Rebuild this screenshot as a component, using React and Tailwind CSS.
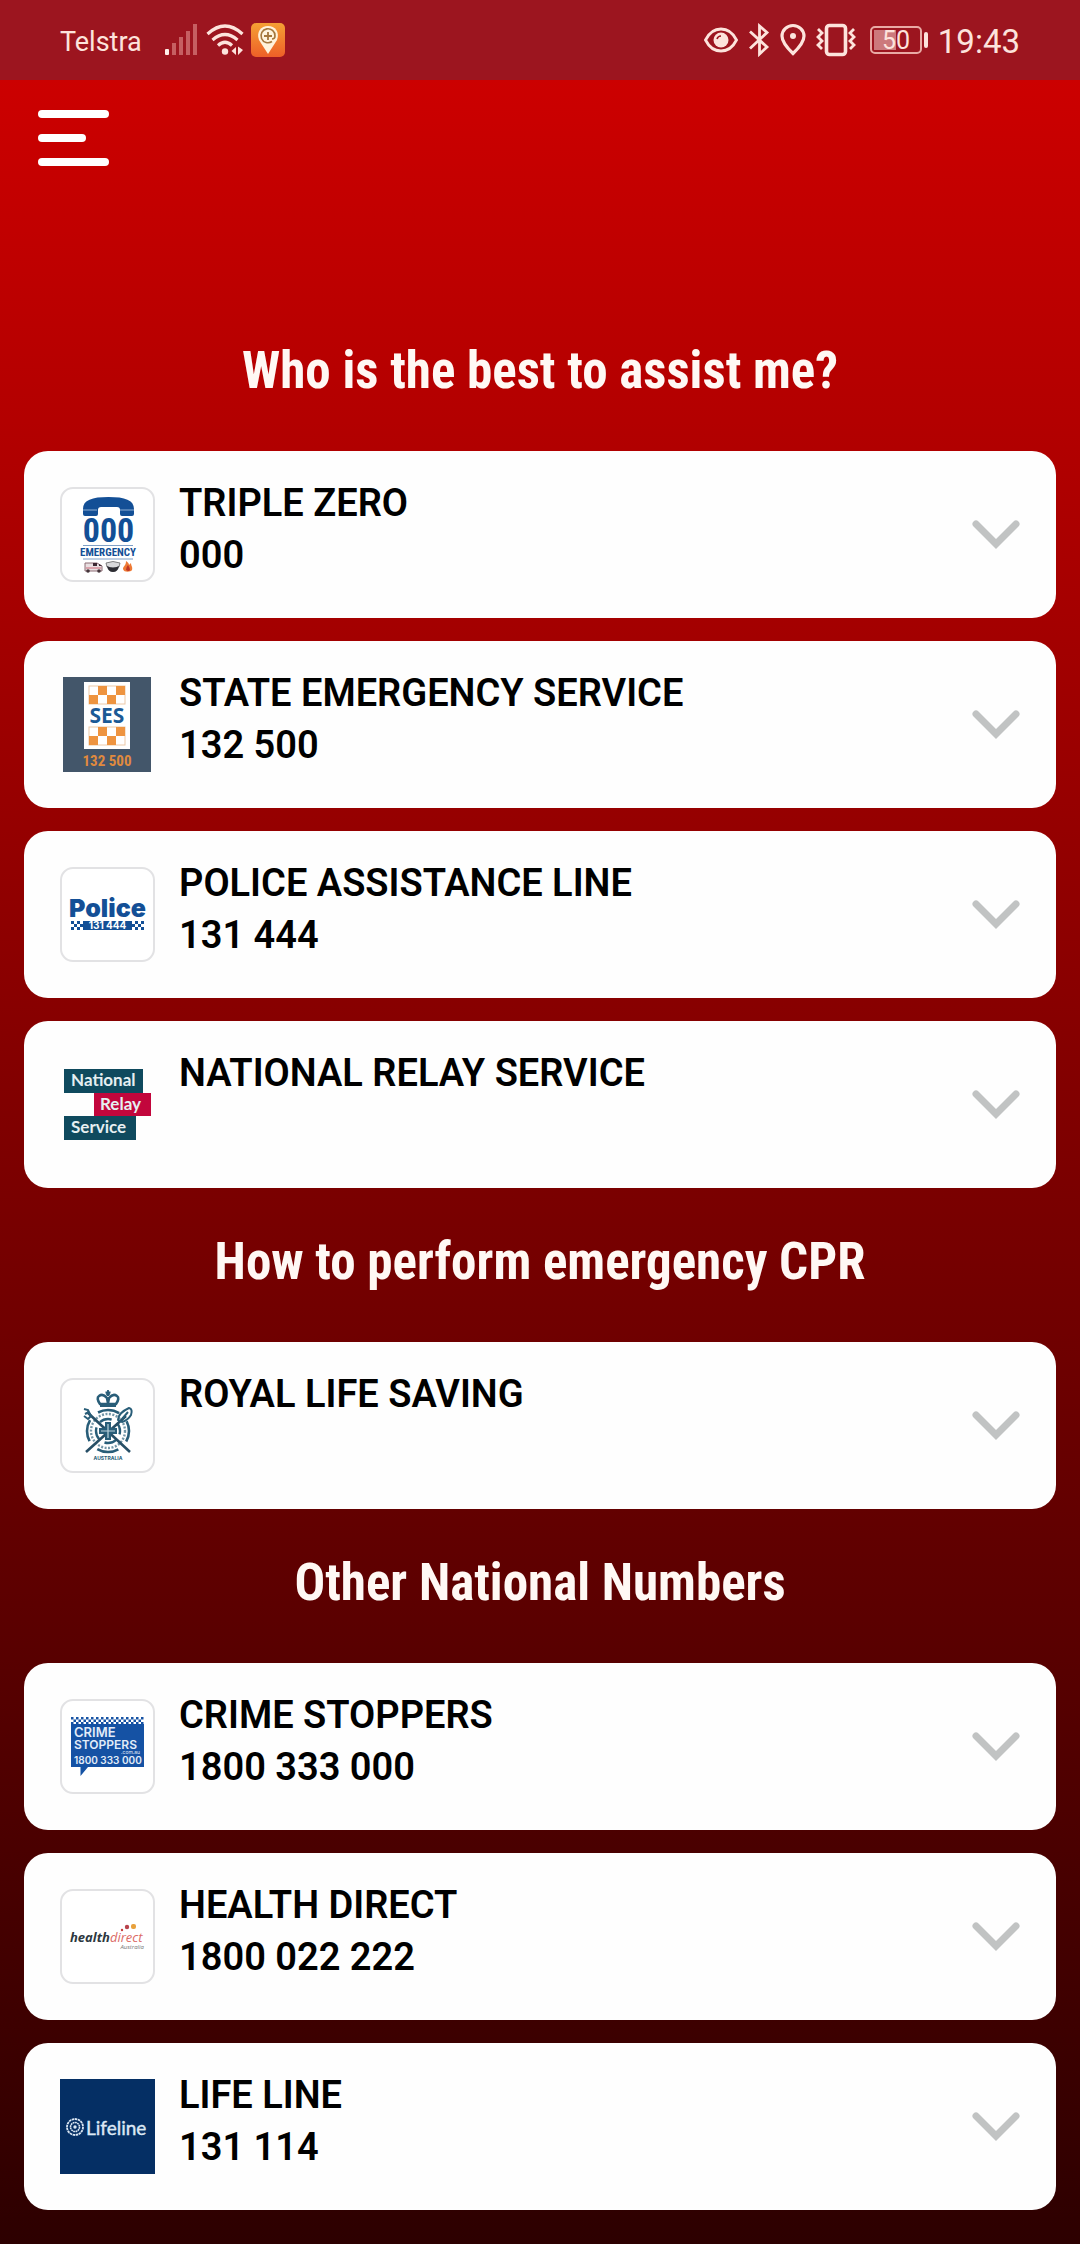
import React from "react";

const CONDENSED = '"Roboto Condensed", "Liberation Sans Narrow", "Open Sans Condensed", sans-serif';

function Checks({ x, y, cols, rows, size, fill, odd = 0 }) {
  const cells = [];
  for (let r = 0; r < rows; r++) {
    for (let c = 0; c < cols; c++) {
      if ((r + c + odd) % 2 === 0) {
        cells.push(<rect key={r + "-" + c} x={x + c * size} y={y + r * size} width={size} height={size} fill={fill} />);
      }
    }
  }
  return <g>{cells}</g>;
}

function Logo({ children, framed }) {
  return (
    <svg viewBox="0 0 95 95" className="size-[95px] shrink-0" aria-hidden="true">
      {framed && <rect x="1" y="1" width="93" height="93" rx="12" fill="#fff" stroke="#e2e2e4" strokeWidth="2" />}
      {children}
    </svg>
  );
}

function TripleZeroLogo() {
  return (
    <Logo framed>
      <path d="M23 22C23 13 32 10 48.500 10S74 13 74 22v5q0 2-2 2H62q-2 0-2-2v-4q0-3-3-3H41q-3 0-3 3v4q0 2-2 2H25q-2 0-2-2z" fill="#134f96" />
      <path d="M23 23h14M60 23h14" stroke="#8fb0d4" strokeWidth="1" />
      <text x="48.500" y="55" textAnchor="middle" fontSize="34" fontWeight="700" fill="#134f96" fontFamily={CONDENSED}>000</text>
      <path d="M23 58.500h50M23 72h50" stroke="#7f9fc6" strokeWidth="1" />
      <text x="48" y="69" textAnchor="middle" fontSize="11" fontWeight="700" fill="#134f96" fontFamily={CONDENSED}>EMERGENCY</text>
      <path d="M25 76h12l5 3v5H25z" fill="#e9dfe1" stroke="#8c6c74" strokeWidth="1" />
      <path d="M33 76h4v3h-4zM39 77l3 2h-3z" fill="#3a2630" />
      <path d="M26 81h15" stroke="#cc6677" strokeWidth="1" />
      <circle cx="28" cy="84" r="1.800" fill="#44343a" />
      <circle cx="39" cy="84" r="1.800" fill="#44343a" />
      <path d="M46 76q7-3 14 0l-1 4q-6 3-12 0z" fill="#d9d9db" stroke="#666" strokeWidth=".8" />
      <path d="M47 79q6 3 12 0-1 6-6 6t-6-6z" fill="#2d2d33" />
      <path d="M63 82c0-3 3-3 3-8 2 1 3 3 3 4l2-2c0 3 2 4 1 7-1 2-8 3-9-1z" fill="#ee7a35" />
      <path d="M66 83q0-3 2-5 2 3 2 5-1 2-4 0z" fill="#bf3625" />
    </Logo>
  );
}

function SesLogo() {
  return (
    <Logo>
      <rect x="3" y="0" width="88" height="95" fill="#43566a" />
      <rect x="24" y="5" width="46" height="67" fill="#fff" />
      <rect x="29" y="9" width="36" height="18" fill="#fff" stroke="#ecc9a8" strokeWidth="1" />
      <Checks x={29} y={9} cols={4} rows={2} size={9} fill="#ee9440" odd={1} />
      <text x="47" y="46" textAnchor="middle" fontSize="21" fontWeight="700" fill="#1b5a96" fontFamily='"Open Sans", sans-serif'>SES</text>
      <rect x="29" y="50" width="36" height="18" fill="#fff" stroke="#ecc9a8" strokeWidth="1" />
      <Checks x={29} y={50} cols={4} rows={2} size={9} fill="#ee9440" odd={1} />
      <text x="47" y="89" textAnchor="middle" fontSize="15" fontWeight="700" fill="#e08a3e" fontFamily={CONDENSED}>132 500</text>
    </Logo>
  );
}

function PoliceLogo() {
  return (
    <Logo framed>
      <text x="47.500" y="50" textAnchor="middle" fontSize="25" fontWeight="900" fill="#134f96" fontFamily='Inter, sans-serif'>Police</text>
      <Checks x={11} y={54} cols={4} rows={3} size={3} fill="#134f96" />
      <rect x="23" y="54" width="49" height="9" fill="#134f96" />
      <Checks x={72} y={54} cols={4} rows={3} size={3} fill="#134f96" odd={1} />
      <text x="47.500" y="62" textAnchor="middle" fontSize="10" fontWeight="700" fill="#fff" fontFamily='Inter, sans-serif'>131 444</text>
    </Logo>
  );
}

function RelayLogo() {
  return (
    <Logo>
      <rect x="4" y="12" width="79" height="24" fill="#0f4a5e" />
      <rect x="34" y="36" width="57" height="23" fill="#c2063c" />
      <rect x="4" y="59" width="72" height="24" fill="#0f4a5e" />
      <g fontSize="17" fontWeight="700" fill="#e6eff2" fontFamily='Lato, sans-serif'>
        <text x="11" y="29">National</text>
        <text x="40" y="53">Relay</text>
        <text x="11" y="76">Service</text>
      </g>
    </Logo>
  );
}

function RoyalLogo() {
  return (
    <Logo framed>
      <g stroke="#285d78" fill="none" strokeWidth="2">
        <circle cx="48" cy="53" r="21" strokeDasharray="22 11" strokeDashoffset="11" strokeWidth="2.600" />
        <circle cx="48" cy="53" r="17" strokeDasharray="2 1.500" strokeWidth="2.400" opacity=".65" />
        <circle cx="48" cy="53" r="12" strokeDasharray="12.500 6.300" strokeDashoffset="9" strokeWidth="2.400" />
        <path d="M27 34 70 74M66 38 26 74" stroke="#274f66" strokeWidth="2.600" />
        <path d="M24 31l4 1 3 6-3 3-4-3M25 36l4-2" />
        <path d="M58 42q0-7 11-12 4 1 2 7-3 5-9 7zM62 41l6-7" />
        <path d="M48 44v18M39 53h18" strokeWidth="6" />
        <path d="M48 46v14M41 53h14" stroke="#b9d2dc" strokeWidth="1.200" />
        <path d="M40 26q-4-6-1-8 4-3 8 2l1 5 1-5q4-5 8-2 3 2-1 8z" strokeWidth="2.600" />
        <path d="M48 12v6M45.500 14.500h5" strokeWidth="1.800" />
      </g>
      <path d="M40 25h16v4H40z" fill="#285d78" />
      <circle cx="48" cy="16" r="2" fill="#285d78" />
      <text x="48" y="82" textAnchor="middle" fontSize="5" fontWeight="700" fill="#285d78" fontFamily='Inter, sans-serif'>AUSTRALIA</text>
    </Logo>
  );
}

function CrimeLogo() {
  return (
    <Logo framed>
      <path d="M11 25h73v43H28l-7.500 9V68H11z" fill="#1552a4" />
      <Checks x={11} y={18} cols={29} rows={3} size={2.5} fill="#1552a4" />
      <g fill="#e2ecf8" fontFamily='Inter, sans-serif' fontWeight="600">
        <text x="14" y="38" fontSize="13">CRIME</text>
        <text x="14" y="50" fontSize="12">STOPPERS</text>
        <text x="80" y="55" textAnchor="end" fontSize="5" fontWeight="400">.com.au</text>
        <text x="14" y="65" fontSize="10">1800 333 000</text>
      </g>
    </Logo>
  );
}

function HealthLogo() {
  return (
    <Logo framed>
      <text x="10" y="53" fontSize="13" fontStyle="italic" fontWeight="700" fill="#2d3840" fontFamily='"Open Sans", sans-serif'>
        health<tspan fontWeight="400" fill="#dc6a66">direct</tspan>
      </text>
      <circle cx="62" cy="41" r="1.200" fill="#c8403c" />
      <circle cx="67" cy="38" r="2.200" fill="#b8434c" />
      <rect x="71" y="35" width="5" height="5" rx="2" fill="#e8a13c" />
      <text x="84" y="60" textAnchor="end" fontSize="6" fontStyle="italic" fill="#777" fontFamily='"Open Sans", sans-serif'>Australia</text>
    </Logo>
  );
}

function LifelineLogo() {
  return (
    <Logo>
      <rect width="95" height="95" fill="#052f64" />
      <g fill="none" stroke="#dce8f4">
        <circle cx="15" cy="48" r="8" strokeWidth="1.800" strokeDasharray="2.500 .6" />
        <circle cx="15" cy="48" r="4.500" strokeWidth="1.600" strokeDasharray="1.800 .5" />
      </g>
      <circle cx="15" cy="48" r="1.700" fill="#dce8f4" />
      <text x="26" y="56" fontSize="19" fontWeight="400" fill="#dce8f4" stroke="#dce8f4" strokeWidth=".4" fontFamily='Lato, sans-serif'>Lifeline</text>
    </Logo>
  );
}

const sections = [
  {
    title: "Who is the best to assist me?",
    items: [
      { name: "TRIPLE ZERO", number: "000", logo: TripleZeroLogo },
      { name: "STATE EMERGENCY SERVICE", number: "132 500", logo: SesLogo },
      { name: "POLICE ASSISTANCE LINE", number: "131 444", logo: PoliceLogo },
      { name: "NATIONAL RELAY SERVICE", logo: RelayLogo },
    ],
  },
  {
    title: "How to perform emergency CPR",
    items: [{ name: "ROYAL LIFE SAVING", logo: RoyalLogo }],
  },
  {
    title: "Other National Numbers",
    items: [
      { name: "CRIME STOPPERS", number: "1800 333 000", logo: CrimeLogo },
      { name: "HEALTH DIRECT", number: "1800 022 222", logo: HealthLogo },
      { name: "LIFE LINE", number: "131 114", logo: LifelineLogo },
    ],
  },
];

function StatusBar() {
  const ink = "#fde3dc";
  return (
    <div className="flex h-20 items-center justify-between bg-[#9c151f] px-[60px] text-[#fde3dc]">
      <div className="flex items-center">
        <span className="w-[104px] pt-1 text-[27px] leading-8">Telstra</span>
        <svg viewBox="0 0 34 34" className="size-[34px]" aria-hidden="true">
          <rect x="1" y="26" width="4" height="6" rx="1" fill="#fff0ea" />
          <g fill="#c65f62">
            <rect x="8" y="20" width="4" height="12" />
            <rect x="15" y="14" width="4" height="18" />
            <rect x="22" y="8" width="4" height="24" />
            <rect x="29" y="1" width="4" height="31" />
          </g>
        </svg>
        <svg viewBox="0 0 38 34" className="ml-2 h-[34px] w-[38px]" fill="none" stroke={ink} strokeWidth="3.200" aria-hidden="true">
          <path d="M1.500 11Q19-5 36.500 11" />
          <path d="M6.500 17Q19 6 31.500 17" />
          <path d="M12 22.500Q19 16 26 22.500" />
          <circle cx="19" cy="28.500" r="3.200" fill={ink} stroke="none" />
          <path d="M30 24v8l-4.500-4zM32 23.500v8.500l5-5z" fill={ink} stroke="none" />
        </svg>
        <svg viewBox="0 0 34 34" className="ml-[7px] size-[34px]" aria-hidden="true">
          <defs>
            <linearGradient id="pinTile" x1="0" y1="0" x2="0" y2="1">
              <stop offset="0" stopColor="#f5a034" />
              <stop offset="1" stopColor="#ee5f28" />
            </linearGradient>
          </defs>
          <rect width="34" height="34" rx="5" fill="url(#pinTile)" />
          <path d="M17 31 8 17C5 9 10 3 17 3s12 6 9 14z" fill="#fff3dc" />
          <path d="M21 18.500a7 7 0 1 1 3-5.500q0 3-3 3" fill="none" stroke="#a5773c" strokeWidth="1.600" />
          <path d="M17 9v8M13 13h8" stroke="#a5773c" strokeWidth="1.800" />
        </svg>
      </div>
      <div className="flex items-center">
        <svg viewBox="0 0 34 26" className="h-[26px] w-[34px]" fill="none" aria-hidden="true">
          <path d="M1.500 13Q7 2 17 2t15.500 11Q27 24 17 24T1.500 13z" stroke={ink} strokeWidth="2.800" />
          <circle cx="17" cy="13" r="7.500" fill={ink} />
          <path d="M13 12q1-3 4-3" stroke="#9c151f" strokeWidth="1.600" />
        </svg>
        <svg viewBox="0 0 22 34" className="ml-[10px] h-[34px] w-[22px]" fill="none" stroke={ink} strokeWidth="2.800" aria-hidden="true">
          <path d="M2 8.500 19 24l-7.500 7V3L19 9.500 2 25.500" />
        </svg>
        <svg viewBox="0 0 26 34" className="ml-[10px] h-[34px] w-[26px]" fill="none" aria-hidden="true">
          <path d="M13 30.500Q2 20 2 13a11 10.500 0 0 1 22 0q0 7-11 17.500z" stroke={ink} strokeWidth="3.200" />
          <circle cx="13" cy="13" r="3" fill={ink} />
        </svg>
        <svg viewBox="0 0 40 34" className="ml-[10px] h-[34px] w-10" fill="none" stroke={ink} aria-hidden="true">
          <rect x="10.500" y="2.500" width="19" height="29" rx="3" strokeWidth="3.600" />
          <path d="M2 6l4 4-4 4 4 4-4 4 4 4M38 6l-4 4 4 4-4 4 4 4-4 4" strokeWidth="2.800" />
        </svg>
        <svg viewBox="0 0 58 30" className="ml-[14px] h-[30px] w-[58px]" role="img" aria-label="Battery 50">
          <rect x="1" y="2" width="50" height="26" rx="4" fill="none" stroke="#e9aaa5" strokeWidth="2" />
          <rect x="4" y="5" width="22" height="20" fill="#cc797c" />
          <rect x="54" y="7" width="4" height="16" rx="2" fill={ink} />
          <text x="26" y="24" textAnchor="middle" fontSize="25" fill={ink} fontFamily="Roboto, sans-serif">50</text>
        </svg>
        <span className="ml-[10px] pt-1 text-[33px] leading-9">19:43</span>
      </div>
    </div>
  );
}

function Card({ name, number, logo: LogoMark }) {
  return (
    <li>
      <button type="button" className="flex w-full items-center rounded-[24px] bg-[#fefefe] px-9 text-left">
        <LogoMark />
        <span className="ml-6 flex min-h-[167px] flex-1 flex-col pt-[26px] text-[38px] font-semibold leading-[52px] text-black">
          <span>{name}</span>
          {number && <span>{number}</span>}
        </span>
        <svg viewBox="0 0 48 30" className="h-[30px] w-12 shrink-0" fill="none" stroke="#c1c3c3" strokeWidth="7" aria-hidden="true">
          <path d="M4 4l20 20L44 4" strokeLinecap="round" />
        </svg>
      </button>
    </li>
  );
}

export default function App() {
  return (
    <div className="min-h-screen bg-[linear-gradient(to_bottom,#cc0000_80px,#2d0000)] pb-[34px] font-[Roboto,sans-serif]">
      <StatusBar />
      <header className="px-[38px] pt-[30px] pb-[131px]">
        <button type="button" aria-label="Open menu" className="flex w-[71px] flex-col gap-4">
          <span className="h-2 w-full rounded-full bg-white" />
          <span className="h-2 w-12 rounded-full bg-white" />
          <span className="h-2 w-full rounded-full bg-white" />
        </button>
      </header>
      <main className="px-6">
        {sections.map((section) => (
          <section key={section.title}>
            <h2 className='pt-[41px] pb-[47px] text-center font-["Roboto_Condensed","Liberation_Sans_Narrow",sans-serif] text-[51px] font-bold leading-[66px] text-[#fff8f4]'>
              {section.title}
            </h2>
            <ul className="flex flex-col gap-[23px]">
              {section.items.map((item) => (
                <Card key={item.name} {...item} />
              ))}
            </ul>
          </section>
        ))}
      </main>
    </div>
  );
}
